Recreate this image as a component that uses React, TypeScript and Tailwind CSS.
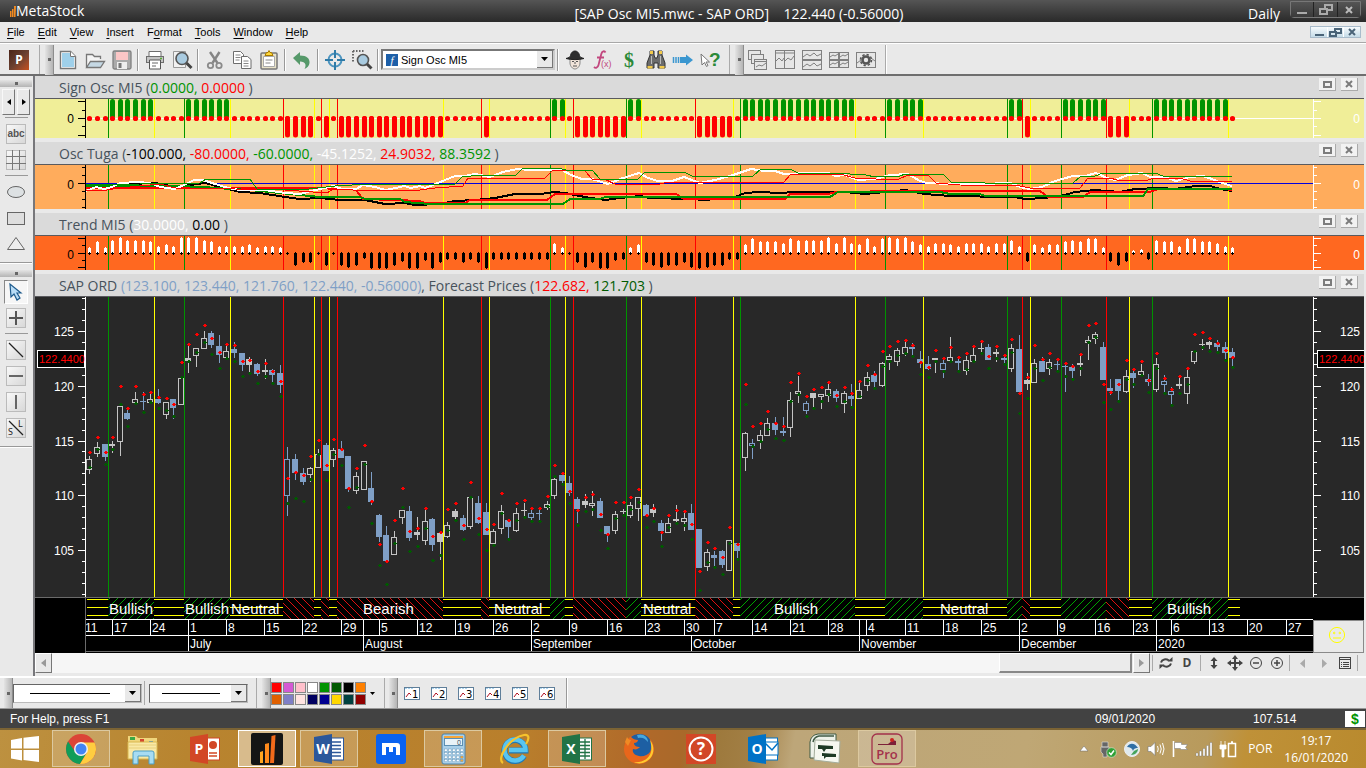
import type { ReactNode } from "react";
import clsx from "clsx";

type Signal = "green" | "red" | "yellow";

// x of the first bar and the distance between two bars
const FIRST_X = 3.3;
const STEP = 7.62;
const barX = (i: number) => FIRST_X + i * STEP;

const COLORS: Record<Signal, string> = {
  green: "#009300",
  red: "#ff0000",
  yellow: "#ffff00",
};

const signals: [number, Signal][] = [
  [22, "green"], [68, "yellow"], [98, "green"], [144, "yellow"], [197, "red"], [228, "yellow"],
  [235, "red"], [243, "yellow"], [251, "red"], [357, "yellow"], [395, "red"], [403, "yellow"],
  [464, "green"], [479, "yellow"], [487, "red"], [540, "green"], [555, "yellow"], [609, "red"],
  [647, "yellow"], [654, "green"], [769, "yellow"], [799, "green"], [837, "yellow"], [921, "green"],
  [936, "red"], [944, "yellow"], [975, "green"], [1020, "red"], [1043, "yellow"], [1066, "green"],
  [1142, "yellow"],
];

const stateAt = (x: number): Signal => {
  let state: Signal = "yellow";
  for (const [sx, s] of signals) if (sx <= x) state = s;
  return state;
};

const trend = [
  6, 12, 6, 13, 16, 13, 13, 13, 12, 7, 9, 7, 16, 16, 16, 13, 12, 7, 7, 7, 7, 9, 6, 7, 7, 6, -1, -12, -9, -9,
  -1, -12, -1, -12, -14, -12, -5, -15, -15, -15, -12, -8, -15, -15, -7, -15, -9, -6, -6, -9, -6, -9, -15,
  -6, -6, -6, -6, -6, -6, -6, -6, 10, 6, -1, -9, -14, -9, -15, -15, -7, -6, 6, 9, -9, -12, -14, -12, -12,
  -9, -14, -15, -14, -12, -12, -6, -6, 9, 15, 12, 12, 12, 10, 15, 13, 13, 13, 13, 16, 10, 16, 10, 9, 15, 7,
  15, 16, 15, 16, 12, 9, 7, 10, 10, 9, 7, 10, 10, 10, 7, 10, 10, 13, 7, -8, 9, 6, 9, 9, 12, 13, 12, 15, 15,
  6, -8, -12, -8, 3, 4, -6, 13, 12, 12, 7, 15, 15, 12, 12, 10, 7, 6,
];

// kind, high, body top, body bottom, low, upper forecast, lower forecast
// h = hollow up, H = filled up, b = filled down, B = hollow down
const candles = `h 456 459 470 474 452 467
h 442 447 454 457 437 449
b 444 444 457 461 452 464
H 441 444 446 453 437 449
h 406 406 442 456 386 404
b 410 413 419 420 408 426
h 392 399 403 403 386 403
b 392 401 402 410 394 412
h 392 399 403 404 392 402
b 389 399 403 404 397 408
h 402 402 415 419 398 410
b 399 399 408 419 404 416
h 378 378 405 405 362 377
H 346 358 361 373 344 361
h 348 348 356 367 334 352
h 331 338 349 349 325 342
b 331 333 345 348 338 354
b 335 346 355 363 352 368
h 345 351 358 359 344 358
b 342 349 353 358 345 361
b 353 353 365 371 361 376
H 357 359 365 372 360 373
b 363 364 374 376 371 383
h 359 370 372 379 363 376
b 369 370 375 382 371 383
b 365 373 385 393 381 396
B 447 459 496 516 478 503
b 454 459 473 480 472 498
b 468 473 482 485 475 501
h 467 468 475 482 456 479
h 449 454 468 468 440 454
b 443 445 471 471 465 480
h 448 450 460 467 439 454
b 441 449 458 458 449 465
b 456 456 489 492 488 507
h 472 476 491 494 468 487
h 461 461 490 490 445 464
b 472 488 502 505 501 523
b 514 515 537 542 544 565
b 526 535 561 561 561 584
h 531 537 555 555 520 543
h 510 510 518 524 488 507
b 506 511 538 541 531 551
H 517 532 535 540 528 546
h 510 521 541 545 508 528
b 518 519 545 551 536 560
H 532 533 542 560 532 555
h 522 525 537 538 509 530
H 509 511 517 522 503 520
b 515 518 530 531 525 539
h 497 497 527 529 482 497
b 496 503 523 524 518 534
b 503 512 535 535 529 550
h 529 531 544 547 524 545
h 505 511 529 534 493 513
b 519 520 527 539 520 539
h 508 513 531 532 503 520
H 503 510 511 517 500 517
B 508 513 518 521 508 521
b 510 513 514 520 508 521
h 501 504 508 510 496 506
h 478 479 496 499 465 476
b 475 475 481 483 473 484
b 476 483 493 496 491 503
b 497 499 509 523 510 525
H 494 501 505 508 497 511
h 491 503 506 516 494 509
b 498 501 518 518 514 530
b 526 526 534 542 534 548
h 511 514 531 534 502 518
H 509 511 512 517 502 515
h 502 505 516 518 497 509
h 497 497 509 521 489 502
b 504 505 516 517 515 527
H 504 509 513 517 508 521
b 520 523 531 541 532 546
h 518 523 533 533 515 527
H 505 519 521 522 510 523
h 512 518 522 531 511 525
b 504 513 530 530 524 539
b 529 529 568 568 571 590
h 549 552 567 571 542 562
b 551 555 558 566 548 567
b 550 551 565 568 557 574
h 540 540 571 571 527 543
b 543 543 551 558 544 559
h 432 433 458 471 384 404
B 439 443 446 459 426 446
h 430 435 441 449 423 441
h 418 423 436 436 411 429
b 417 423 430 435 423 438
b 417 431 433 436 426 440
h 392 400 428 437 382 401
h 376 391 394 403 373 394
B 401 403 411 414 396 416
H 393 393 398 407 389 408
h 394 394 397 409 387 401
h 383 389 396 402 382 394
b 389 391 398 402 395 406
h 391 393 404 413 387 401
b 384 396 399 407 393 407
h 383 390 399 399 381 396
h 372 377 386 391 365 380
b 371 375 382 388 374 388
h 362 363 386 387 351 366
h 354 356 360 370 346 361
h 348 350 362 366 341 355
h 342 347 354 356 340 353
b 343 347 349 355 345 356
b 351 359 363 368 362 374
b 356 364 369 370 367 377
H 358 358 360 373 350 361
B 359 363 370 378 358 371
h 337 357 361 362 347 361
b 359 361 363 372 357 371
h 356 360 371 375 353 369
h 348 355 362 362 346 361
H 343 348 349 352 341 353
b 344 347 360 360 356 368
H 349 352 354 362 346 358
b 355 358 360 365 355 364
h 344 348 369 372 339 352
b 335 349 392 392 393 413
H 373 380 384 390 377 398
h 359 363 383 383 345 368
b 357 361 372 372 359 380
h 359 362 369 375 353 367
b 360 364 365 370 359 371
b 363 366 367 392 363 376
b 364 367 371 378 366 379
H 356 363 365 376 354 368
h 336 340 343 360 325 342
h 332 334 339 344 323 337
b 342 347 380 380 384 402
b 379 388 391 395 392 409
b 379 379 391 400 384 401
h 370 376 392 393 360 379
b 371 373 378 388 369 384
h 364 371 375 377 361 375
b 374 379 382 386 380 392
h 358 364 390 392 353 368
B 375 381 385 392 378 393
B 387 391 395 407 389 405
H 378 384 386 389 376 393
h 370 377 394 404 368 384
h 350 351 362 364 334 351
H 339 344 345 350 332 347
H 341 342 345 349 338 351
b 340 343 347 352 343 352
b 342 347 353 361 350 360
b 348 352 358 366 357 367`
  .split("\n")
  .map((line) => {
    const [kind, ...rest] = line.split(" ");
    return { kind, v: rest.map((n) => Number(n) - 297) };
  });

const oscLines = [
  { color: "#000", width: 2, points: "86,187 110,186 130,184 155,183 175,187 190,185 205,183 220,187 240,192 260,193 285,197 300,199 320,198 340,200 365,200 385,204 405,203 415,205 440,204 455,201 475,200 495,198 515,194 540,194 555,192 565,193 585,197 605,200 620,198 640,196 650,198 690,199 705,200 735,197 745,193 760,192 780,193 795,192 845,192 865,194 885,192 905,190 925,194 950,196 975,196 985,197 1015,197 1025,199 1045,198 1065,195 1075,192 1095,190 1120,192 1135,189 1160,188 1175,189 1195,186 1210,186 1220,189 1232,191" },
  { color: "#f00", width: 2, points: "86,188 175,188 300,188 355,189 363,199 395,200 420,201 425,203 465,203 470,200 547,200 555,194 676,194 684,199 785,199 790,194 828,194 836,192 905,191 1040,191 1048,197 1083,197 1090,192 1150,192 1158,189 1225,189 1232,190" },
  { color: "#009300", width: 2, points: "86,186 175,186 205,187 215,188 250,190 300,195 320,197 360,197 365,199 400,199 405,202 430,204 563,204 570,199 600,199 605,197 830,197 838,192 940,192 950,194 980,194 985,196 1143,196 1148,189 1232,189" },
  { color: "#fff", width: 2, points: "86,191 96,187 104,189 112,187 120,183 138,182 150,183 160,187 175,189 184,185 194,180 203,180 215,184 228,188 240,190 265,190 285,193 300,194 311,191 320,189 333,186 342,189 356,189 363,185 375,187 385,190 396,188 404,186 411,188 420,186 425,188 433,185 445,180 455,176 465,176 475,174 490,177 503,172 517,169 530,170 562,170 571,175 582,179 592,179 608,184 620,179 639,173 648,178 658,181 672,181 684,177 700,183 715,180 730,176 751,169 765,171 775,171 784,174 808,173 828,173 836,176 845,175 858,180 875,179 890,175 908,174 920,181 927,183 950,184 980,184 1011,183 1020,187 1030,189 1042,187 1055,181 1073,176 1085,176 1096,173 1107,178 1115,180 1128,175 1142,173 1150,177 1165,177 1176,181 1190,177 1203,176 1212,179 1222,183 1232,186" },
  { color: "#f00", width: 1, points: "86,190 107,190 120,188 160,184 175,188 235,189 285,190 327,193 333,189 353,190 420,190 435,188 463,186 468,178 545,178 553,170 585,171 592,179 604,179 615,184 660,184 668,182 784,182 791,174 840,174 855,178 897,180 908,175 928,175 936,183 960,185 1020,186 1030,188 1080,188 1088,178 1110,178 1117,180 1148,180 1154,178 1180,178 1190,181 1232,181" },
  { color: "#009300", width: 1, points: "86,185 140,184 200,183 206,179 250,179 257,189 300,190 335,186 370,184 455,184 462,177 480,175 516,175 523,168 558,168 566,170 592,170 600,179 638,179 645,172 684,172 692,176 753,176 761,169 790,169 798,173 840,173 850,174 866,175 875,177 900,176 905,174 943,174 951,182 985,183 1073,183 1080,177 1095,176 1103,173 1155,173 1163,176 1232,176" },
];

const weeks: [number, string][] = [
  [-3, "11"], [26, "17"], [64, "24"], [102, "1"], [140, "8"], [178, "15"], [216, "22"], [255, "29"],
  [293, "5"], [331, "12"], [369, "19"], [407, "26"], [445, "2"], [483, "9"], [521, "16"], [559, "23"],
  [598, "30"], [628, "7"], [666, "14"], [704, "21"], [742, "28"], [773, ""], [780, "4"], [819, "11"],
  [857, "18"], [895, "25"], [933, "2"], [971, "9"], [1009, "16"], [1047, "23"], [1070, ""], [1085, "6"],
  [1123, "13"], [1161, "20"], [1200, "27"],
];

const months: [number, string][] = [
  [102, "July"], [277, "August"], [445, "September"], [605, "October"], [773, "November"],
  [933, "December"], [1070, "2020"],
];

const bandLabels: [number, string][] = [
  [23, "Bullish"], [99, "Bullish"], [145, "Neutral"], [277, "Bearish"], [408, "Neutral"],
  [557, "Neutral"], [688, "Bullish"], [854, "Neutral"], [1081, "Bullish"],
];

function SignalLines() {
  return (
    <g shapeRendering="crispEdges">
      {signals.map(([x, s]) => (
        <rect key={x} x={x} y={0} width={1} height="100%" fill={COLORS[s]} />
      ))}
    </g>
  );
}

function SignPlot() {
  return (
    <svg className="block h-full w-full">
      <rect x={0} y={19} width="100%" height={1} fill="#fff" />
      <SignalLines />
      {candles.map((_, i) => {
        const x = Math.round(barX(i));
        const s = stateAt(x);
        return (
          <g key={i}>
            {s === "green" && <path d={`M${x + 0.5} 2.5V17`} stroke="#009300" strokeWidth={5} strokeLinecap="round" />}
            {s === "red" && <path d={`M${x + 0.5} 19.5V36`} stroke="#f00" strokeWidth={5} strokeLinecap="round" />}
            <circle cx={x + 0.5} cy={19.5} r={2.6} fill="#f00" />
          </g>
        );
      })}
    </svg>
  );
}

function OscPlot() {
  return (
    <svg className="block h-full w-full">
      <SignalLines />
      <rect x={0} y={18} width="100%" height={1} fill="#0000e0" />
      <g transform="translate(-86 -165)" fill="none" shapeRendering="crispEdges">
        {oscLines.map((l, i) => (
          <polyline key={i} points={l.points} stroke={l.color} strokeWidth={l.width} />
        ))}
      </g>
    </svg>
  );
}

function TrendPlot() {
  return (
    <svg className="block h-full w-full">
      <SignalLines />
      {trend.map((h, i) => {
        const x = Math.round(barX(i));
        return (
          <g key={i} shapeRendering="crispEdges">
            {h > 0 ? (
              <>
                <rect x={x - 1} y={18 - h} width={3} height={h - 1} fill="#fff" />
                <rect x={x} y={17 - h} width={1} height={1} fill="#fff" />
                <rect x={x - 1} y={17} width={3} height={1} fill="#000" />
                <rect x={x} y={16} width={1} height={3} fill="#000" />
              </>
            ) : (
              <>
                <rect x={x - 1} y={17} width={3} height={-h} fill="#000" />
                <rect x={x} y={16} width={1} height={2 - h} fill="#000" />
              </>
            )}
          </g>
        );
      })}
    </svg>
  );
}

function Dot({ x, y, fill }: { x: number; y: number; fill: string }) {
  return <path d={`M${x - 1} ${y - 1}h2v1h1v1h-1v1h-2v-1h-1v-1h1z`} fill={fill} />;
}

function PricePlot() {
  return (
    <svg className="block h-full w-full">
      <SignalLines />
      <g shapeRendering="crispEdges">
        {candles.map(({ kind, v }, i) => {
          const [high, top, bottom, low, up, down] = v;
          const x = Math.round(barX(i));
          const color = kind.toLowerCase() === "b" ? "#7f9fc6" : "#c4c4c4";
          const hollow = kind === "h" || kind === "B";
          return (
            <g key={i}>
              {top > high && <rect x={x} y={high} width={1} height={top - high} fill={color} />}
              {low > bottom && <rect x={x} y={bottom} width={1} height={low - bottom} fill={color} />}
              {hollow ? (
                <rect x={x - 2.5} y={top + 0.5} width={5} height={Math.max(bottom - top - 1, 1)} fill="none" stroke={color} />
              ) : (
                <rect x={x - 3} y={top} width={6} height={bottom - top} fill={color} />
              )}
              <Dot x={x + 1} y={up} fill="#f00" />
              <Dot x={x + 1} y={down} fill="#005a00" />
            </g>
          );
        })}
      </g>
    </svg>
  );
}

function Axis({ side, ticks, labels, color, tag }: {
  side: "left" | "right";
  ticks: [number, number][];
  labels: [number, string][];
  color: string;
  tag?: boolean;
}) {
  const left = side === "left";
  return (
    <svg className="block h-full w-[51px] shrink-0" fontFamily="Liberation Sans, Arial, sans-serif" fontSize={12}>
      <g shapeRendering="crispEdges" fill={color}>
        <rect x={left ? 50 : 0} y={0} width={1} height="100%" />
        {ticks.map(([y, w]) => (
          <rect key={y} x={left ? 50 - w : 1} y={y} width={w} height={1} />
        ))}
      </g>
      {labels.map(([y, t]) => (
        <text key={t} x={left ? 39 : 47} y={y} textAnchor="end" fill={color}>{t}</text>
      ))}
      {tag && (
        <g>
          <rect x={left ? 2.5 : 4.5} y={53.5} width={47} height={17} fill="#000" stroke="#fff" />
          <text x={left ? 4 : 6} y={66} fontSize={11} fill="#f00">122.4400</text>
        </g>
      )}
    </svg>
  );
}

const priceTicks: [number, number][] = Array.from({ length: 28 }, (_, k) => [
  Math.round(34 + (k - 3) * 10.95),
  (k - 3) % 5 === 0 ? 7 : 3,
]);
const priceLabels: [number, string][] = [[39, "125"], [94, "120"], [149, "115"], [203, "110"], [258, "105"]];

function PaneHeader({ children, first }: { children: ReactNode; first?: boolean }) {
  return (
    <div className={clsx("flex items-end justify-between border-b border-[#5a5a5e] bg-[#dadada] pr-1.5 pl-6", first ? "h-[23px]" : "h-[27px] border-t-4 border-t-[#e9e9e9]")}>
      <h2 className="font-['Open_Sans','Segoe_UI',sans-serif] text-sm leading-5 whitespace-pre text-[#47525c]">{children}</h2>
      <div className="flex gap-[5px] pb-[7px]">
        <button aria-label="Maximize pane" className="flex h-[13px] w-[17px] items-center justify-center border-r border-b border-[#aaa] bg-[#f2f2f2]">
          <svg width="9" height="7"><rect x="1" y="1" width="7" height="5" fill="none" stroke="#7c7c7c" strokeWidth="2" /></svg>
        </button>
        <button aria-label="Close pane" className="flex h-[13px] w-[17px] items-center justify-center border-r border-b border-[#aaa] bg-[#f2f2f2]">
          <svg width="8" height="8"><path d="M1 1l6 6M7 1L1 7" stroke="#7c7c7c" strokeWidth="2" /></svg>
        </button>
      </div>
    </div>
  );
}

function Plot({ className, ticks, labels, left, right, tag, children }: {
  className: string;
  ticks: [number, number][];
  labels: [number, string][];
  left: string;
  right: string;
  tag?: boolean;
  children: ReactNode;
}) {
  return (
    <div className={clsx("flex w-full", className)}>
      <Axis side="left" ticks={ticks} labels={labels} color={left} tag={tag} />
      <div className="min-w-0 flex-1 overflow-hidden">{children}</div>
      <Axis side="right" ticks={ticks} labels={labels} color={right} tag={tag} />
    </div>
  );
}

function TimeAxis() {
  const edges: [number, Signal][] = [[1, "yellow"], ...signals];
  return (
    <div className="flex h-14 border-t border-[#6b6b6b] bg-black">
      <div className="w-[51px] shrink-0 border-r border-[#6b6b6b]" />
      <div className="min-w-0 flex-1 overflow-hidden">
        <svg className="block h-full w-full" fontFamily="Liberation Sans, Arial, sans-serif" fontSize={12} fill="#fff">
          <defs>
            <pattern id="up" width="8" height="8" patternUnits="userSpaceOnUse">
              <path d="M7 0h1v1h-1zM6 1h1v1h-1zM5 2h1v1h-1zM4 3h1v1h-1zM3 4h1v1h-1zM2 5h1v1h-1zM1 6h1v1h-1zM0 7h1v1h-1z" fill="#00a000" />
            </pattern>
            <pattern id="down" width="8" height="8" patternUnits="userSpaceOnUse">
              <path d="M0 0h1v1h-1zM1 1h1v1h-1zM2 2h1v1h-1zM3 3h1v1h-1zM4 4h1v1h-1zM5 5h1v1h-1zM6 6h1v1h-1zM7 7h1v1h-1z" fill="#e01010" />
            </pattern>
          </defs>
          {edges.map(([x, s], i) => {
            const end = i + 1 < edges.length ? edges[i + 1][0] : 1154;
            if (s === "yellow") {
              return <path key={x} d={`M${x} 1.5H${end}M${x} 9.5H${end}M${x} 17.5H${end}`} stroke="#ff0" />;
            }
            return <rect key={x} x={x} y={0} width={end - x} height={21} fill={s === "green" ? "url(#up)" : "url(#down)"} />;
          })}
          {bandLabels.map(([x, t]) => (
            <text key={x} x={x} y={16} fontSize={15}>{t}</text>
          ))}
          <g shapeRendering="crispEdges">
            <rect x={0} y={21} width="100%" height={1} />
            <rect x={0} y={37} width="100%" height={1} />
            <rect x={0} y={53} width="100%" height={1} fill="#6b6b6b" />
            {weeks.map(([x]) => <rect key={x} x={x} y={22} width={1} height={15} />)}
            {months.map(([x]) => <rect key={x} x={x} y={38} width={1} height={15} />)}
            <rect x={277} y={22} width={1} height={15} />
          </g>
          {weeks.map(([x, t]) => <text key={x} x={x + 2} y={34}>{t}</text>)}
          {months.map(([x, t]) => <text key={x} x={x + 2} y={50}>{t}</text>)}
        </svg>
      </div>
      <div className="flex w-[51px] shrink-0 flex-col justify-end">
        <div className="flex h-[33px] items-center justify-center border border-[#8a8a8a] bg-[#e9e9e9] pr-1 pb-1">
          <svg width="18" height="18" viewBox="0 0 18 18" fill="none" stroke="#ffff00" strokeWidth="1">
            <circle cx="9" cy="9" r="7.6" />
            <path d="M5 12h8" />
            <circle cx="6.2" cy="7" r=".8" /><circle cx="11.8" cy="7" r=".8" />
          </svg>
        </div>
      </div>
    </div>
  );
}

function Sep() {
  return <span className="mx-0.5 h-[22px] w-0.5 shrink-0 border-l border-[#999] bg-white" />;
}

function Grip() {
  return (
    <span className="flex h-[30px] w-[9px] shrink-0 items-center justify-center border-r border-[#8d8d8d] bg-linear-to-r from-[#e4e4e4] to-[#b4b4b4]">
      <i className="size-[3px] bg-[#666]" />
    </span>
  );
}

function Tool({ label, children }: { label: string; children: ReactNode }) {
  return (
    <button aria-label={label} className="flex h-7 w-[27px] shrink-0 items-center justify-center">
      <svg width="22" height="22" viewBox="0 0 22 22" fill="none" stroke="#6d6d6d">{children}</svg>
    </button>
  );
}

function Layout({ label, children }: { label: string; children: ReactNode }) {
  return (
    <Tool label={label}>
      <g fill="#e6e6e6" stroke="#808080">{children}</g>
    </Tool>
  );
}

function DropArrow() {
  return (
    <span className="pointer-events-none absolute inset-y-0 right-0 flex w-4 items-center justify-center border-r border-b border-[#777] bg-[#e9e9e9]">
      <svg width="7" height="4"><path d="M0 0h7L3.500 4z" /></svg>
    </span>
  );
}

function Toolbar() {
  return (
    <div className="flex h-[34px] items-center border-t border-[#a8a8a8] border-b-2 border-b-[#6e6e6e] bg-[#e9e9e9] pt-0.5 shadow-[inset_0_1px_0_#fff]">
      <button aria-label="Power console" className="ml-[9px] flex size-5 shrink-0 items-center justify-center bg-linear-to-br from-[#4a2417] via-[#6a4030] to-[#c8501a] text-xs font-bold text-white">P</button>
      <span className="ml-2.5 h-full w-px shrink-0 bg-[#aaa]" />
      <span className="w-[5px] shrink-0" />
      <Grip />
      <Tool label="New">
        <path d="M3.500 2.500h10l5 5v12h-15z" fill="#fff" stroke="#777" strokeWidth="1.400" />
        <path d="M5 4h8v4h4v10H5z" fill="#9fd0ea" stroke="none" />
        <path d="M13.500 2.500v5h5" fill="#fff" stroke="#777" />
      </Tool>
      <Tool label="Open">
        <path d="M2.500 18V5.500h6l2 2h6V10" fill="#f4f4f4" stroke="#777" strokeWidth="1.300" />
        <path d="M2.500 18.500l4-6h14l-4 6z" fill="#c5d8e4" stroke="#777" strokeWidth="1.300" />
      </Tool>
      <Tool label="Save">
        <rect x="2" y="2" width="18" height="18" rx="1.500" fill="#aaa" stroke="#808080" strokeWidth="1.300" />
        <rect x="5" y="3" width="12" height="8" fill="#fbc6c6" stroke="none" />
        <rect x="6" y="13" width="10" height="7" fill="#eee" stroke="none" />
        <rect x="7.500" y="14" width="3" height="5" fill="#777" stroke="none" />
      </Tool>
      <Sep />
      <Tool label="Print">
        <path d="M5 8V2.500h12V8" fill="#fff" />
        <rect x="2.500" y="7.500" width="17" height="6" fill="#c4c4c4" />
        <path d="M5.500 11h11v9h-11z" fill="#fff" stroke="#555" />
        <path d="M8 14h6M8 17h4" stroke="#666" />
        <path d="M16 9.500h2" stroke="#5a3" strokeWidth="1.500" />
      </Tool>
      <Tool label="Print preview">
        <path d="M2.500 2.500h12v16h-12z" fill="#f2f2f2" stroke="#999" />
        <circle cx="11" cy="9.500" r="6" fill="#a9cbe0" stroke="#555" strokeWidth="1.600" />
        <path d="M15.500 14l5 5" stroke="#444" strokeWidth="3" />
      </Tool>
      <Sep />
      <Tool label="Cut">
        <path d="M6 3l7.500 11M15.500 3L8.500 14" stroke="#858585" strokeWidth="2.400" />
        <circle cx="6.500" cy="16.500" r="2.700" stroke="#8b8b8b" strokeWidth="1.800" />
        <circle cx="15" cy="16.500" r="2.700" stroke="#8b8b8b" strokeWidth="1.800" />
      </Tool>
      <Tool label="Copy">
        <path d="M2.500 2.500h7l3 3v9h-10z" fill="#fff" />
        <path d="M4.500 6h5M4.500 8.500h5M4.500 11h4" stroke="#888" />
        <path d="M10.500 7.500h6l3.500 3v9h-9.500z" fill="#fff" />
        <path d="M12.500 12h5M12.500 14.500h5M12.500 17h5" stroke="#888" />
      </Tool>
      <Tool label="Paste">
        <rect x="3" y="4" width="16" height="16" rx="1" fill="#e8e2c8" stroke="#777" strokeWidth="1.500" />
        <path d="M5.500 7.500h11v10h-11z" fill="#fff" stroke="#aaa" />
        <path d="M7.500 11h7M7.500 14h5" stroke="#888" />
        <path d="M7 6.500l1.500-3h1.500l1-2 1 2h1.500l1.500 3z" fill="#ffd83a" stroke="#a87a00" />
      </Tool>
      <Sep />
      <Tool label="Undo">
        <path d="M2 9l7-6v3.500c7 0 10 3.500 9.500 7.500-.3 3-2.500 5-5 6 2-3.500 1.500-7.500-4.500-7.500V16z" fill="#56996a" stroke="none" />
      </Tool>
      <Sep />
      <Tool label="Crosshair">
        <circle cx="11" cy="11" r="6.500" stroke="#4d95c0" strokeWidth="2" />
        <path d="M11 1v8M11 13v8M1 11h8M13 11h8" stroke="#2f7ba8" strokeWidth="2" />
      </Tool>
      <Tool label="Zoom box">
        <path d="M2 2h12M2 2v12" stroke="#666" strokeWidth="2" strokeDasharray="1.500 1.500" />
        <circle cx="12" cy="11" r="5.500" fill="#a9cbe0" stroke="#555" strokeWidth="1.600" />
        <path d="M16 15l4.500 4.500" stroke="#444" strokeWidth="3" />
      </Tool>
      <Sep />
      <div className="relative h-[21px] w-[174px] shrink-0 border-2 border-[#777] border-r-[#ccc] border-b-[#ccc] bg-white">
        <span className="pointer-events-none absolute top-[3px] left-[3px] flex size-3 items-center justify-center bg-[#1d5fa8] font-['Liberation_Serif',serif] text-[11px] leading-3 text-white italic">f</span>
        <select aria-label="Indicator" className="block h-full w-full appearance-none pl-[18px] font-['Liberation_Sans',Arial,sans-serif] text-[11px] leading-4">
          <option>Sign Osc MI5</option>
        </select>
        <DropArrow />
      </div>
      <Sep />
      <Tool label="Expert advisor">
        <path d="M6 9h10v5c0 3-2.500 6-5 6s-5-3-5-6z" fill="#f1e4da" stroke="#888" />
        <path d="M2 9.500c3-1 4-1 4.500-3C7 3.500 9 2 11 2s4 1.500 4.500 4.500c.5 2 1.500 2 4.500 3-5 1.500-13 1.500-18 0z" fill="#2e2e2e" stroke="#222" />
        <path d="M8 12.500h2M12 12.500h2M9 17h4M11 13v2" stroke="#555" />
      </Tool>
      <Tool label="Indicator builder">
        <path d="M14.500 3.500c-1-2-3.500-1.500-4.200 1.500L7.500 16c-.7 2.800-3 3.500-4.500 2M6 8.500h7" stroke="#c2487f" strokeWidth="1.800" />
        <text x="10" y="18" fontSize="9" fontFamily="Liberation Sans, sans-serif" fill="#c2487f" stroke="none">(x)</text>
      </Tool>
      <Tool label="System tester">
        <text x="6" y="18" fontSize="20" fontFamily="Liberation Serif, serif" fontWeight="bold" fill="#2c8a38" stroke="none">$</text>
      </Tool>
      <Tool label="Explorer">
        <path d="M5 2h4v4l1 3h2l1-3V2h4v4l3 8v5h-7v-5h-4v5H2v-5l3-8z" fill="#6c6c6c" stroke="#333" />
        <path d="M5 2h3v3H5zM14 2h3v3h-3zM2.500 17h5v2.500h-5zM14.500 17h5v2.500h-5z" fill="#f2c94a" stroke="none" />
        <path d="M6.500 7v8M15.500 7v8" stroke="#bbb" />
      </Tool>
      <Tool label="Forecaster">
        <path d="M1.500 8v6M4 8v6M6.500 8v6" stroke="#3b97d0" strokeWidth="1.500" />
        <path d="M8 8h6V5.500l7 5.500-7 5.500V14H8z" fill="#3b97d0" stroke="none" />
      </Tool>
      <Tool label="Context help">
        <path d="M2 5l1 11 2.500-2.500 2 4 1.500-1-2-3.500h3.500z" fill="#fff" stroke="#777" />
        <text x="10" y="17" fontSize="19" fontWeight="bold" fontFamily="Liberation Sans, sans-serif" fill="#2c8a38" stroke="none">?</text>
      </Tool>
      <span className="ml-1.5 h-full w-px shrink-0 bg-[#aaa]" />
      <span className="w-[5px] shrink-0" />
      <Grip />
      <Layout label="Cascade">
        <rect x="1.500" y="1.500" width="12" height="9" /><rect x="4.500" y="5.500" width="12" height="9" />
        <rect x="7.500" y="10.500" width="12" height="10" /><path d="M7.500 12.500h12M9 18l3-2 3 1 4-3" />
      </Layout>
      <Layout label="Tile columns">
        <rect x="1.500" y="1.500" width="9" height="18" /><rect x="10.500" y="1.500" width="10" height="18" />
        <path d="M1.500 4h19M2 12l3-3 3 3 2-3M11 12l3-3 3 2 3-4" />
      </Layout>
      <Layout label="Tile rows">
        <rect x="1.500" y="1.500" width="19" height="9" /><rect x="1.500" y="11.500" width="19" height="9" />
        <path d="M2 8l4-3 3 2 4-3 3 3 4-2M2 18l4-3 3 2 4-3 3 3 4-2" />
      </Layout>
      <Layout label="Tile grid">
        <rect x="1.500" y="3.500" width="9" height="7" /><rect x="11.500" y="3.500" width="9" height="7" />
        <rect x="1.500" y="11.500" width="9" height="7" /><rect x="11.500" y="11.500" width="9" height="7" />
        <path d="M2 8l3-2 2 1 3-2M12 8l3-2 2 1 3-2M2 16l3-2 2 1 3-2M12 16l3-2 2 1 3-2" />
      </Layout>
      <Layout label="Layout options">
        <rect x="1.500" y="3.500" width="19" height="15" />
        <path d="M2 14l4-3M16 9l4 3" />
        <circle cx="11" cy="11" r="3.500" stroke="#555" strokeWidth="2.600" />
        <circle cx="11" cy="11" r="5.500" fill="none" stroke="#555" strokeWidth="1.600" strokeDasharray="2.300 2" />
      </Layout>
      <span className="ml-1.5 h-full w-0.5 shrink-0 border-l border-[#aaa] bg-white" />
    </div>
  );
}

function SideButton({ label, children, flat }: { label: string; children: ReactNode; flat?: boolean }) {
  return (
    <button aria-label={label} className={clsx("flex h-5 w-5 items-center justify-center", !flat && "border border-[#bbb] bg-linear-to-br from-[#f8f8f8] to-[#d8d8d8]")}>
      <svg width="20" height="20" viewBox="0 0 20 20" className="shrink-0" fill="none" stroke="#555">{children}</svg>
    </button>
  );
}

function SideBar() {
  const grip = (
    <span className="flex h-[7px] w-full items-center justify-center bg-linear-to-b from-[#e4e4e4] to-[#b4b4b4]">
      <i className="size-[3px] bg-[#666]" />
    </span>
  );
  return (
    <aside className="flex w-[35px] shrink-0 flex-col items-center border-r-2 border-[#77777b] bg-[#e9e9e9] pt-1 pr-px">
      {grip}
      <div className="mt-0.5 flex gap-0.5">
        {["M5 0v6L1 3z", "M1 0v6l4-3z"].map((d, i) => (
          <button key={d} aria-label={i ? "Next" : "Previous"} className="flex h-[26px] w-[13px] items-center justify-center border border-[#f8f8f8] border-r-[#777] border-b-[#777]">
            <svg width="6" height="6"><path d={d} /></svg>
          </button>
        ))}
      </div>
      <span className="mt-0.5 mb-1.5 h-px w-[23px] bg-[#999]" />
      <button className="h-5 w-5 border border-[#bbb] bg-linear-to-br from-[#f8f8f8] to-[#d8d8d8] font-['Liberation_Sans',Arial,sans-serif] text-[10px] leading-[18px] font-bold text-[#555]">abc</button>
      <div className="mt-1.5" />
      <SideButton label="Grid"><path d="M0 6.500h20M0 13.500h20M6.500 0v20M13.500 0v20" stroke="#777" /></SideButton>
      <span className="mt-[5px] mb-1.5 h-px w-[23px] bg-[#999]" />
      <div className="flex flex-col gap-1.5">
        <SideButton flat label="Ellipse"><ellipse cx="10" cy="10" rx="8.500" ry="5.500" fill="#dde1e3" stroke="#666" /></SideButton>
        <SideButton flat label="Rectangle"><rect x="1.500" y="4.500" width="17" height="12" fill="#dedede" stroke="#666" /></SideButton>
        <SideButton flat label="Triangle"><path d="M10 3.500l8.500 12h-17z" fill="#eee" stroke="#666" /></SideButton>
      </div>
      <span className="mt-2 mb-1.5 h-0.5 w-full border-t border-[#999] bg-white" />
      {grip}
      <button aria-label="Select" className="mt-[3px] flex h-6 w-6 items-center justify-center border border-[#888] border-r-white border-b-white bg-[#f6f6f6]">
        <svg width="20" height="20" viewBox="0 0 20 20"><path d="M4 2l1 13 3-3 3 6 3-2-3-5h4z" fill="#b8dcf6" stroke="#1d5a8c" strokeWidth="1.200" /></svg>
      </button>
      <div className="mt-1" />
      <SideButton label="Crosshair"><path d="M10 3v14M3 10h14" stroke="#555" strokeWidth="2" /></SideButton>
      <span className="mt-[5px] mb-1.5 h-px w-[23px] bg-[#999]" />
      <div className="flex flex-col gap-1.5">
        <SideButton label="Trend line"><path d="M3 3l14 14" stroke="#222" strokeWidth="1.300" /></SideButton>
        <SideButton label="Horizontal line"><path d="M3 10h14" stroke="#666" strokeWidth="2" /></SideButton>
        <SideButton label="Vertical line"><path d="M10 3v14" stroke="#666" strokeWidth="2" /></SideButton>
        <SideButton label="Semi-log line">
          <path d="M3 3l14 14" stroke="#222" strokeWidth="1.300" />
          <text x="2" y="17" fontSize="9" fill="#222" stroke="none">S</text>
          <text x="12" y="9" fontSize="9" fill="#222" stroke="none">L</text>
        </SideButton>
      </div>
      <span className="mt-2 h-0.5 w-full border-t border-[#999] bg-white" />
    </aside>
  );
}

function Mini({ label, children }: { label: string; children: ReactNode }) {
  return (
    <button aria-label={label} className="flex h-5 w-[21px] shrink-0 items-center justify-center">
      <svg width="16" height="16" viewBox="0 0 16 16" fill="none" stroke="#444" strokeWidth="1.500">{children}</svg>
    </button>
  );
}

function ScrollRow() {
  return (
    <div className="flex h-5 items-center bg-[#e9e9e9] pr-1">
      <button aria-label="Scroll left" className="flex h-5 w-[17px] shrink-0 items-center justify-center border border-white border-r-[#777] border-b-[#777]">
        <svg width="5" height="8"><path d="M5 0v8L0 4z" fill="#999" /></svg>
      </button>
      <div className="flex h-full min-w-0 flex-1 justify-end bg-[#f6f6f6]">
        <div className="h-full w-[133px] border border-white border-r-2 border-b-2 border-r-[#888] border-b-[#888] bg-[#ebebeb]" />
      </div>
      <button aria-label="Scroll right" className="ml-px flex h-5 w-[17px] shrink-0 items-center justify-center border border-white border-r-[#777] border-b-[#777]">
        <svg width="5" height="8"><path d="M0 0v8l5-4z" fill="#999" /></svg>
      </button>
      <span className="mx-0.5 h-4 w-px bg-[#aaa]" />
      <Mini label="Refresh">
        <path d="M3 7.500C4 4 8 3.500 11 5.500M13 8.500c-1 3.500-5 4-8 2" strokeWidth="2" />
        <path d="M9.500 6.500h5V2zM6.500 9.500h-5V14z" fill="#444" stroke="none" />
      </Mini>
      <button className="h-5 w-[22px] shrink-0 font-['Open_Sans',sans-serif] text-xs font-bold text-[#444]">D</button>
      <span className="mx-0.5 h-4 w-px bg-[#aaa]" />
      <Mini label="Fit vertically"><path d="M8 4v8" strokeWidth="2" /><path d="M4.500 6L8 2l3.500 4zM4.500 10L8 14l3.500-4z" fill="#444" stroke="none" /></Mini>
      <Mini label="Move"><path d="M8 2v12M2 8h12" strokeWidth="2" /><path d="M5 4l3-4 3 4zM5 12l3 4 3-4zM4 5L0 8l4 3zM12 5l4 3-4 3z" fill="#444" stroke="none" /></Mini>
      <Mini label="Zoom out"><circle cx="8" cy="8" r="5.500" strokeWidth="1" /><path d="M5 8h6" /></Mini>
      <Mini label="Zoom in"><circle cx="8" cy="8" r="5.500" strokeWidth="1" /><path d="M5 8h6M8 5v6" /></Mini>
      <span className="mx-0.5 h-4 w-px bg-[#aaa]" />
      <Mini label="Previous security"><path d="M10 4v9L5 8.500z" fill="#aaa" stroke="none" /></Mini>
      <Mini label="Next security"><path d="M6 4v9l5-4.500z" fill="#aaa" stroke="none" /></Mini>
      <Mini label="Security list">
        <rect x="2.500" y="2.500" width="11" height="11" strokeWidth="1" />
        <path d="M3 4.500h10" strokeWidth="1" />
        <path d="M4 7.500h1M6 7.500h6M4 9.500h1M6 9.500h6M4 11.500h1M6 11.500h6" strokeWidth="1" />
      </Mini>
      <span className="mx-0.5 h-4 w-px bg-[#aaa]" />
    </div>
  );
}

const palette = [
  "bg-[#ff0000]", "bg-[#d459d4]", "bg-[#ffc0cb]", "bg-white", "bg-[#009300]", "bg-[#005a00]", "bg-black", "bg-[#ff8000]",
  "bg-[#e06000]", "bg-[#7f7fc6]", "bg-[#ffe4e1]", "bg-[#000060]", "bg-[#000090]", "bg-[#ffd700]", "bg-[#00403f]", "bg-[#900000]",
];

function BottomBar() {
  return (
    <div className="flex h-[33px] items-center border-t-2 border-white border-b border-b-[#999] bg-[#e9e9e9]">
      <span className="w-1 shrink-0" />
      <Grip />
      <div className="relative h-[19px] w-[129px] shrink-0 border border-[#666] border-r-[#bbb] border-b-[#bbb] bg-white">
        <select aria-label="Line style" className="block h-full w-full appearance-none" />
        <span className="pointer-events-none absolute top-2 left-4 h-px w-20 bg-black" />
        <DropArrow />
      </div>
      <span className="mx-0.5 h-6 w-px bg-[#aaa]" />
      <div className="relative ml-0.5 h-[19px] w-[99px] shrink-0 border border-[#666] border-r-[#bbb] border-b-[#bbb] bg-white">
        <select aria-label="Line weight" className="block h-full w-full appearance-none" />
        <span className="pointer-events-none absolute top-2 left-3 h-px w-[58px] bg-black" />
        <DropArrow />
      </div>
      <span className="ml-2 h-full w-px shrink-0 bg-[#aaa]" />
      <span className="w-[5px] shrink-0" />
      <Grip />
      <div className="grid shrink-0 grid-cols-8 gap-px">
        {palette.map((c, i) => (
          <button key={c} aria-label={`Color ${i + 1}`} className={clsx("size-[11px] border border-[#888]", c)} />
        ))}
      </div>
      <button aria-label="More colors" className="flex w-3 shrink-0 justify-center"><svg width="5" height="3"><path d="M0 0h5L2.500 3z" /></svg></button>
      <span className="ml-1.5 h-full w-px shrink-0 bg-[#aaa]" />
      <span className="w-1 shrink-0" />
      <Grip />
      {[1, 2, 3, 4, 5, 6].map((n) => (
        <button key={n} aria-label={`Layout ${n}`} className="flex w-[27px] shrink-0 items-center justify-center">
          <svg width="16" height="13" viewBox="0 0 16 13">
            <rect x=".5" y=".5" width="15" height="12" fill="#fff" stroke="#5f7f9a" />
            <path d="M1 1.500h9" stroke="#a9d4f0" strokeDasharray="2 1" />
            <path d="M2 10l3-4 2 2" fill="none" stroke="#b01020" />
            <text x="8" y="11" fontSize="10" fontFamily="DejaVu Sans, sans-serif">{n}</text>
          </svg>
        </button>
      ))}
      <span className="ml-1.5 h-full w-0.5 shrink-0 border-l border-[#999] bg-white" />
    </div>
  );
}

function Chrome() {
  return (
    <svg width="32" height="32" viewBox="0 0 32 32">
      <circle cx="16" cy="16" r="15" fill="#db4437" />
      <path d="M3 8.500A15 15 0 0 0 15 31l6.500-11H11z" fill="#0f9d58" />
      <path d="M29.500 9.500H16l6 10L15 31A15 15 0 0 0 29.500 9.500z" fill="#ffcd40" />
      <circle cx="16" cy="16" r="7" fill="#f1f1f1" /><circle cx="16" cy="16" r="5.500" fill="#4285f4" />
    </svg>
  );
}

function Explorer() {
  return (
    <svg width="32" height="32" viewBox="0 0 32 32">
      <path d="M1 3h8l2 2h19v20H1z" fill="#f0d67c" />
      <path d="M3 4h5v3H3z" fill="#3aa845" /><path d="M13 6h4v3h-4z" fill="#d4452f" /><path d="M22 8h4v3h-4z" fill="#3a8fd6" />
      <path d="M1 9h29v17H1z" fill="#f9e9a6" stroke="#d9b74e" /><path d="M2 12h27M2 15h27" stroke="#e8cf7a" />
      <path d="M6 31V20q0-2 2-2h17q2 0 2 2v11h-5v-8H11v8z" fill="#a7dcf2" stroke="#4d9fc4" />
    </svg>
  );
}

function Office({ letter, fill, sheet }: { letter: string; fill: string; sheet: ReactNode }) {
  return (
    <svg width="32" height="32" viewBox="0 0 32 32">
      <rect x="16" y="5" width="14.500" height="22" fill="#fff" stroke={fill} />
      {sheet}
      <path d="M1 4l18-3v30L1 28z" fill={fill} />
      <text x="10" y="21" fontSize="14" fontWeight="bold" textAnchor="middle" fontFamily="Open Sans, sans-serif" fill="#fff">{letter}</text>
    </svg>
  );
}

function MetaStockIcon() {
  return (
    <svg width="32" height="32" viewBox="0 0 32 32">
      <rect width="32" height="32" rx="2" fill="#151515" />
      <path d="M9 30V19l3-1v12z" fill="#ffa520" /><path d="M14 30V11l4-1v20z" fill="#ff8a1c" /><path d="M19 30L20.500 3l4-1-1.500 28z" fill="#f26a1b" />
    </svg>
  );
}

function Maxthon() {
  return (
    <svg width="32" height="32" viewBox="0 0 32 32">
      <rect x="1" y="1" width="30" height="30" rx="3" fill="#0a62f0" />
      <path d="M7 10h15q3 0 3 3v9h-4v-7q0-1-1-1h-2v5h-4v-5h-3v8H7z" fill="#fff" />
    </svg>
  );
}

function Calculator() {
  return (
    <svg width="32" height="32" viewBox="0 0 32 32">
      <rect x="5" y="1" width="23" height="30" rx="2" fill="#a9cfe8" stroke="#4a83ab" />
      <path d="M7 3h19v2H7z" fill="#f5a63a" /><rect x="7.500" y="5.500" width="18" height="7" fill="#e9f3f8" stroke="#5c8fb2" />
      <text x="20" y="12" fontSize="7" fill="#345">0</text>
      {[16, 19.5, 23, 26.5].map((y) => [8, 12, 16, 20, 24].map((x) => (
        <rect key={`${x}-${y}`} x={x - 0.5} y={y} width="2.600" height="2.200" fill={x === 24 && y > 22 ? "#f5a63a" : "#fff"} stroke="#5c8fb2" strokeWidth=".4" />
      )))}
    </svg>
  );
}

function InternetExplorer() {
  return (
    <svg width="32" height="32" viewBox="0 0 32 32" fill="none">
      <path d="M25 23A10.500 10.500 0 1 1 26.500 17.500H10" stroke="#1f78b4" strokeWidth="6" />
      <path d="M25 22.500A10.500 10.500 0 1 1 26.500 17H10" stroke="#59c5f1" strokeWidth="4.500" />
      <path d="M4 30C-3 26 10 5 25 2c7-1 4 6 2 9" stroke="#f6c32c" strokeWidth="2.200" />
    </svg>
  );
}

function Firefox() {
  return (
    <svg width="32" height="32" viewBox="0 0 32 32">
      <circle cx="16" cy="16" r="15" fill="#e8661b" />
      <path d="M8 4C12 0 22 0 26 5c3 4 3 10 1 14-2 3-7 5-11 4-5-1-7-4-6-7 3 1 5 0 7-2-3 0-6-1-6-4 2 0 4-1 4-3-3 0-5-1-7-3z" fill="#1d5fa3" />
      <path d="M14 2c6-2 11 2 11 7-3-4-6-5-10-4z" fill="#49a8dc" />
      <path d="M27 7c5 6 5 16-3 21-4 3-10 3-13 1 8 1 15-3 17-10 1-4 0-8-1-12z" fill="#ffcb2e" />
      <path d="M2 9l2-5c1 2 2 3 4 3l-3 6z" fill="#f08a24" />
    </svg>
  );
}

function HelpIcon() {
  return (
    <svg width="32" height="32" viewBox="0 0 32 32">
      <rect x="1" y="1" width="30" height="30" fill="#d24726" />
      <circle cx="16" cy="16" r="11.500" fill="none" stroke="#fff" strokeWidth="2" />
      <text x="16" y="22" fontSize="17" fontWeight="bold" textAnchor="middle" fontFamily="Open Sans, sans-serif" fill="#fff">?</text>
    </svg>
  );
}

function Notes() {
  return (
    <svg width="32" height="32" viewBox="0 0 32 32">
      <path d="M9 1h18v24H1V9q1-7 8-8z" fill="#eef2ea" stroke="#3f5a44" />
      <path d="M4 9q1-5 6-6h15" fill="none" stroke="#3f5a44" strokeWidth="1.500" />
      <path d="M6 7l25 1-1 22-25-3z" fill="#f5f7ef" stroke="#a4ad9c" />
      <path d="M9 12l15 1v3h-7l-2 3-2-3H9zM13 20l14 1v3H17l-2 2v-3h-2z" fill="#1d3a24" />
    </svg>
  );
}

function ProIcon() {
  return (
    <svg width="32" height="32" viewBox="0 0 32 32">
      <rect x="1" y="1" width="30" height="30" rx="5" fill="none" stroke="#a3314b" strokeWidth="1.300" />
      <text x="16" y="26" fontSize="13" textAnchor="middle" fontFamily="Open Sans, sans-serif" fontWeight="600" fill="#a3314b">Pro</text>
      <path d="M7 11h10l5-4 3 1v4H7z" fill="#7c1f38" /><circle cx="21" cy="7" r="2" fill="#c22" />
    </svg>
  );
}

const apps: { name: string; icon: ReactNode; open?: boolean; active?: boolean }[] = [
  { name: "Chrome", icon: <Chrome />, open: true },
  { name: "File Explorer", icon: <Explorer /> },
  { name: "PowerPoint", icon: <Office letter="P" fill="#d24726" sheet={<><circle cx="24" cy="12" r="4" fill="#d24726" /><path d="M20 20h8M20 23h8" stroke="#d24726" strokeWidth="1.500" /></>} /> },
  { name: "MetaStock", icon: <MetaStockIcon />, open: true, active: true },
  { name: "Word", icon: <Office letter="W" fill="#2b579a" sheet={<path d="M19 9h9M19 12.500h9M19 16h9M19 19.500h9M19 23h9" stroke="#2b579a" strokeWidth="1.500" />} />, open: true },
  { name: "Maxthon", icon: <Maxthon /> },
  { name: "Calculator", icon: <Calculator />, open: true },
  { name: "Internet Explorer", icon: <InternetExplorer /> },
  { name: "Excel", icon: <Office letter="X" fill="#217346" sheet={<path d="M19 9h10M19 12.500h10M19 16h10M19 19.500h10M19 23h10M24 6v20" stroke="#217346" strokeWidth="1.300" />} />, open: true },
  { name: "Firefox", icon: <Firefox /> },
  { name: "Help", icon: <HelpIcon /> },
  { name: "Outlook", icon: <Office letter="O" fill="#0072c6" sheet={<><rect x="18" y="9" width="13" height="13" fill="#fff" stroke="#0072c6" /><path d="M18 10l7 7 6-7" fill="none" stroke="#0072c6" strokeWidth="1.500" /></>} /> },
  { name: "Notes", icon: <Notes /> },
  { name: "Pro", icon: <ProIcon />, open: true },
];

function TrayIcon({ label, children }: { label: string; children: ReactNode }) {
  return (
    <button aria-label={label} className="flex w-6 shrink-0 justify-center">
      <svg width="18" height="18" viewBox="0 0 18 18" fill="none" stroke="#fff">{children}</svg>
    </button>
  );
}

function TaskBar() {
  return (
    <footer className="flex h-10 border-t-2 border-[#7b6334] bg-[linear-gradient(100deg,#bd9140_0%,#b8842f_14%,#b97f2c_38%,#b0692a_47%,#a9692a_50%,#9b7638_51%,#a27f45_55%,#bda679_58%,#bfa775_75%,#b89a5c_88%,#bf9138_91%,#b98a2e_100%)] font-['Open_Sans','Segoe_UI',sans-serif]">
      <button aria-label="Start" className="mr-0.5 flex w-[50px] shrink-0 items-center justify-center">
        <svg width="28" height="26" viewBox="0 0 28 26" fill="#fff"><path d="M0 4l11-2v10.500H0zM12.500 1.800L28 0v12.500H12.500zM0 14h11v10.500L0 22.500zM12.500 14H28v12l-15.500-2z" /></svg>
      </button>
      <div className="flex gap-1 pb-px">
        {apps.map((a) => (
          <button
            key={a.name}
            aria-label={a.name}
            className={clsx(
              "flex w-[58px] shrink-0 items-center justify-center",
              a.open && !a.active && "border border-[#dcc9a0] bg-white/20",
              a.active && "border border-white bg-white/45",
            )}
          >
            {a.icon}
          </button>
        ))}
      </div>
      <div className="ml-auto flex items-center text-white">
        <TrayIcon label="Show hidden icons"><path d="M5 11l4-5 4 5z" fill="#fff" stroke="#666" strokeWidth=".5" /></TrayIcon>
        <TrayIcon label="Safely remove hardware">
          <path d="M3 2h6v5H3zM2 7h8v5l-2 2v3H4v-3l-2-2z" fill="#666" stroke="#ddd" strokeWidth=".6" /><circle cx="12.500" cy="12.500" r="4.800" fill="#2fa035" stroke="#d8f0d8" strokeWidth=".6" /><path d="M10 12.500l2 2 3-4" strokeWidth="1.500" />
        </TrayIcon>
        <TrayIcon label="Sync">
          <circle cx="9" cy="9" r="7.500" fill="#dfe9ee" stroke="#eee" /><path d="M4 7c3-5 8-4 11 1-2 0-4 0-5 3-1-3-3-4-6-4z" fill="#2f6fa5" stroke="none" /><path d="M8 15c4 0 7-3 7-6l-4 2z" fill="#44a35c" stroke="none" />
        </TrayIcon>
        <TrayIcon label="Volume"><path d="M1 6.500h3l4-4v13l-4-4H1z" fill="#fff" stroke="#777" strokeWidth=".6" /><path d="M10.500 6q1.500 3 0 6M13 4.500q2.500 4.500 0 9M15.500 3q3 6 0 12" /></TrayIcon>
        <TrayIcon label="Action center"><path d="M2.500 1v16" strokeWidth="1.600" /><path d="M3.500 2.500h7v2h6l-2 3 2 2h-7v-1h-6z" fill="#fff" stroke="#777" strokeWidth=".5" /></TrayIcon>
        <TrayIcon label="Network"><path d="M1 13h2v3H1zM4.500 11h2v5h-2zM8 8.500h2V16H8zM11.500 5.500h2V16h-2zM15 2.500h2V16h-2z" fill="#fff" stroke="#777" strokeWidth=".4" /></TrayIcon>
        <TrayIcon label="Battery"><path d="M9.500 3.500h7v13h-7zM12 2h2" strokeWidth="1.500" /><path d="M2 1v4M6 1v4M1 5h6v4H5v8H3V9H1z" fill="#fff" strokeWidth=".8" /></TrayIcon>
        <button className="ml-2 text-xs">POR</button>
        <div className="mr-[18px] ml-3 text-center text-xs leading-[17px]">
          <p>19:17</p>
          <p>16/01/2020</p>
        </div>
      </div>
    </footer>
  );
}

const menus = ["File", "Edit", "View", "Insert", "Format", "Tools", "Window", "Help"];
const hotkeys: Record<string, number> = { Format: 1 };

function TitleBar() {
  return (
    <header className="flex h-[22px] justify-between bg-linear-to-b from-[#555] to-[#2a2a2a] font-['Open_Sans','Segoe_UI',sans-serif] text-white">
      <div className="flex flex-1 items-center pr-[102px] pl-2.5">
        <svg width="6" height="11" className="mt-px shrink-0"><path d="M0 5h1.500v6H0zM2 3h1.500v8H2zM4 0h2L5.500 11H4z" fill="#ef8a22" /></svg>
        <h1 className="text-sm leading-5">MetaStock</h1>
      </div>
      <p className="text-sm leading-[27px] whitespace-pre">[SAP Osc MI5.mwc - SAP ORD]    122.440 (-0.56000)</p>
      <div className="flex flex-1 justify-end">
        <span className="mr-2.5 text-sm leading-[27px]">Daily</span>
        <div className="mt-px mr-[5px] flex h-[17px] rounded-b border border-[#777]">
          <button aria-label="Minimize" className="flex w-[23px] items-center justify-center border-r border-[#222] bg-linear-to-b from-[#555] to-[#3a3a3a]"><svg width="10" height="10"><path d="M0 8h10" stroke="#aaa" strokeWidth="2" /></svg></button>
          <button aria-label="Restore" className="flex w-6 items-center justify-center border-r border-[#222] bg-linear-to-b from-[#555] to-[#3a3a3a]"><svg width="14" height="11" fill="none" stroke="#aaa" strokeWidth="2"><path d="M1 5h7v5H1zM6 4V1h7v5H9" /></svg></button>
          <button aria-label="Close" className="flex w-[22px] items-center justify-center bg-linear-to-b from-[#555] to-[#3a3a3a]"><svg width="8" height="8"><path d="M1 1l6 6M7 1L1 7" stroke="#bbb" strokeWidth="2" /></svg></button>
        </div>
      </div>
    </header>
  );
}

function MenuBar() {
  return (
    <nav className="flex h-5 items-center justify-between bg-[#e9e9e9] pr-[5px] pl-px font-['Liberation_Sans',Arial,sans-serif] text-[11px] text-black">
      <div className="flex gap-px">
        {menus.map((m) => {
          const k = hotkeys[m] ?? 0;
          return (
            <button key={m} className="px-1.5">
              {m.slice(0, k)}<u className="underline-offset-2">{m[k]}</u>{m.slice(k + 1)}
            </button>
          );
        })}
      </div>
      <div className="flex h-3 border border-[#a9bccb] bg-linear-to-b from-[#f7fbfd] to-[#c5dce8]">
        <button aria-label="Minimize window" className="flex w-4 items-center justify-center"><svg width="9" height="8"><path d="M0 7h9" stroke="#4a6478" strokeWidth="2" /></svg></button>
        <button aria-label="Restore window" className="flex w-[17px] items-center justify-center border-x border-[#fff]"><svg width="13" height="9" fill="none" stroke="#4a6478" strokeWidth="2"><path d="M1 4h6v4H1zM6 3V1h6v4H8" /></svg></button>
        <button aria-label="Close window" className="flex w-4 items-center justify-center"><svg width="8" height="8"><path d="M1 1l6 6M7 1L1 7" stroke="#4a6478" strokeWidth="2" /></svg></button>
      </div>
    </nav>
  );
}

export default function App() {
  return (
    <div className="flex min-h-screen flex-col overflow-hidden bg-[#e9e9e9]">
      <TitleBar />
      <MenuBar />
      <Toolbar />
      <div className="flex">
        <SideBar />
        <main className="mr-0.5 min-w-0 flex-1 pb-[3px]">
          <PaneHeader first>
            Sign Osc MI5 (<span className="text-[#009300]">0.0000, </span><span className="text-[#f00]">0.0000 </span>)
          </PaneHeader>
          <Plot className="h-[39px] bg-[#f0ee98]" left="#000" right="#fff" ticks={[[2, 7], [11, 3], [19, 7], [27, 3], [36, 7]]} labels={[[24, "0"]]}>
            <SignPlot />
          </Plot>
          <PaneHeader>
            Osc Tuga (<span className="text-black">-100.000, </span><span className="text-[#f00]">-80.0000, </span><span className="text-[#009300]">-60.0000, </span><span className="text-white">-45.1252, </span><span className="text-[#f00]">24.9032, </span><span className="text-[#009300]">88.3592 </span>)
          </PaneHeader>
          <Plot className="h-11 bg-[#ffac5c]" left="#000" right="#fff" ticks={[[2, 3], [10, 3], [18, 7], [26, 3], [34, 3], [42, 3]]} labels={[[24, "0"]]}>
            <OscPlot />
          </Plot>
          <PaneHeader>
            Trend MI5 (<span className="text-white">30.0000, </span><span className="text-black">0.00 </span>)
          </PaneHeader>
          <Plot className="h-[34px] bg-[#ff6820]" left="#000" right="#fff" ticks={[[2, 7], [9, 3], [17, 7], [24, 3], [31, 7]]} labels={[[23, "0"]]}>
            <TrendPlot />
          </Plot>
          <PaneHeader>
            SAP ORD <span className="text-[#7f9fc6]">(123.100, 123.440, 121.760, 122.440, -0.56000)</span>, Forecast Prices (<span className="text-[#f00]">122.682, </span><span className="text-[#005a00]">121.703 </span>)
          </PaneHeader>
          <Plot className="h-[300px] bg-[#282828]" left="#fff" right="#fff" ticks={priceTicks} labels={priceLabels} tag>
            <PricePlot />
          </Plot>
          <TimeAxis />
          <ScrollRow />
        </main>
      </div>
      <BottomBar />
      <div className="flex h-[19px] items-center bg-[#424242] pl-2.5 font-['Liberation_Sans',Arial,sans-serif] text-xs text-white">
        <p className="flex-1">For Help, press F1</p>
        <p className="w-[158px]">09/01/2020</p>
        <p className="w-[92px]">107.514</p>
        <span className="mr-px flex h-4 w-5 items-center justify-center bg-white text-sm font-bold text-[#009300]">$</span>
      </div>
      <TaskBar />
    </div>
  );
}
